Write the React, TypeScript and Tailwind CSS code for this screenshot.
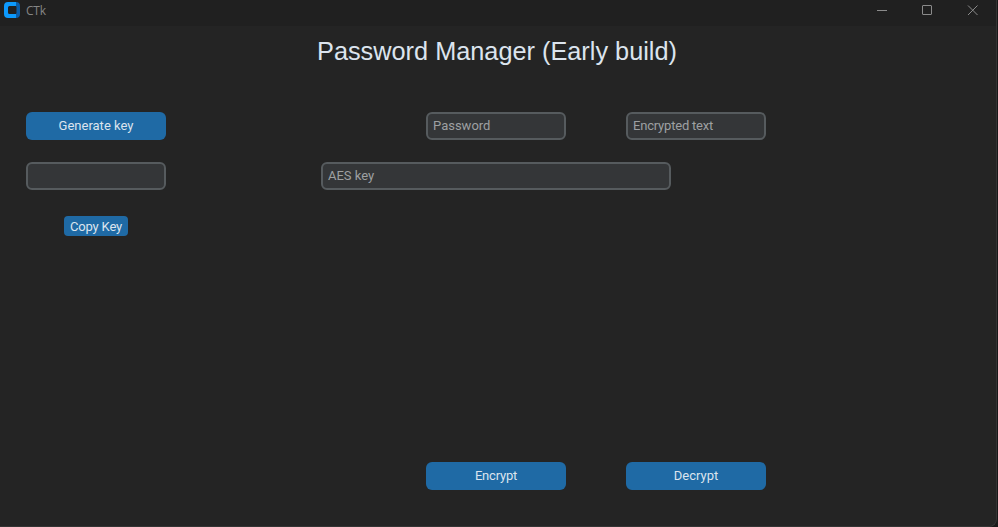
import type { ReactNode } from "react";

function Button({ children, className = "h-7 w-[140px] rounded-md pb-0.5" }: { children: ReactNode; className?: string }) {
  return (
    <button
      type="button"
      className={`flex items-center justify-center bg-[#1f6aa5] text-[13px] leading-none text-[#dce4ee] ${className}`}
    >
      {children}
    </button>
  );
}

function Entry({ placeholder, label, className = "w-[140px]" }: { placeholder?: string; label: string; className?: string }) {
  return (
    <input
      type="text"
      aria-label={label}
      placeholder={placeholder}
      className={`h-7 rounded-md border-2 border-[#565b5e] bg-[#343638] px-[5px] pb-px text-[13px] text-[#dce4ee] outline-none placeholder:text-[#9ea0a2] placeholder:opacity-100 ${className}`}
    />
  );
}

function TitleBar() {
  return (
    <header className="flex h-[26px] items-start justify-between bg-[#202020]">
      <div className="flex h-[22px] items-center pl-1">
        <svg width="16" height="16" viewBox="0 0 16 16" className="-mt-0.5">
          <path d="M4 0H12V4H5.5Q4 4 4 5.5V10.5Q4 12 5.5 12H12V16H4Q0 16 0 12V4Q0 0 4 0Z" fill="#0d99fc" />
          <path d="M12 0Q16 0 16 4V12Q16 16 12 16V12L12.5 11V5L12 4Z" fill="#0a5ca8" />
        </svg>
        <span className="ml-[6px] font-['Open_Sans','Noto_Sans',sans-serif] text-[12px] leading-[22px] tracking-[-0.2px] text-[#858585]">CTk</span>
      </div>
      <svg width="119" height="22" viewBox="877 0 119 22" fill="none" stroke="#8b8b8b" strokeWidth="1">
        <path d="M877 10.5H887" />
        <rect x="922.5" y="5.5" width="9" height="9" rx="0.5" />
        <path d="M968 5.5L977.5 15M977.5 5.5L968 15" />
      </svg>
    </header>
  );
}

export default function App() {
  return (
    <div className="h-[527px] w-[998px] overflow-hidden bg-[#191919] font-['Roboto',sans-serif]">
      <div className="flex h-[527px] w-[997px] flex-col overflow-hidden rounded-br-lg border-r border-b border-[#343434] bg-[#242424]">
        <TitleBar />
        <h1 className="mt-[10px] h-8 w-[994px] text-center font-['Liberation_Sans',Arial,sans-serif] text-[25.3px] leading-[31px] text-[#dce4ee]">
          Password Manager (Early build)
        </h1>
        <main className="mt-[44px] flex h-[378px] pl-[26px]">
          <section className="flex w-[140px] flex-col items-center">
            <Button>Generate key</Button>
            <div className="mt-[22px] flex">
              <Entry label="Generated key" />
            </div>
            <Button className="mt-[26px] h-5 w-16 rounded-[4px] pt-px tracking-[-0.15px]">Copy Key</Button>
          </section>
          <section className="ml-[155px] flex w-[445px] flex-col">
            <div className="flex gap-[60px] pl-[105px]">
              <Entry label="Password" placeholder="Password" />
              <Entry label="Encrypted text" placeholder="Encrypted text" className="w-[140px] tracking-[-0.2px]" />
            </div>
            <Entry label="AES key" placeholder="AES key" className="mt-[22px] w-[350px]" />
            <div className="mt-auto flex gap-[60px] pl-[105px]">
              <Button className="h-7 w-[140px] rounded-md pb-0.5 tracking-[-0.2px]">Encrypt</Button>
              <Button>Decrypt</Button>
            </div>
          </section>
        </main>
      </div>
    </div>
  );
}
